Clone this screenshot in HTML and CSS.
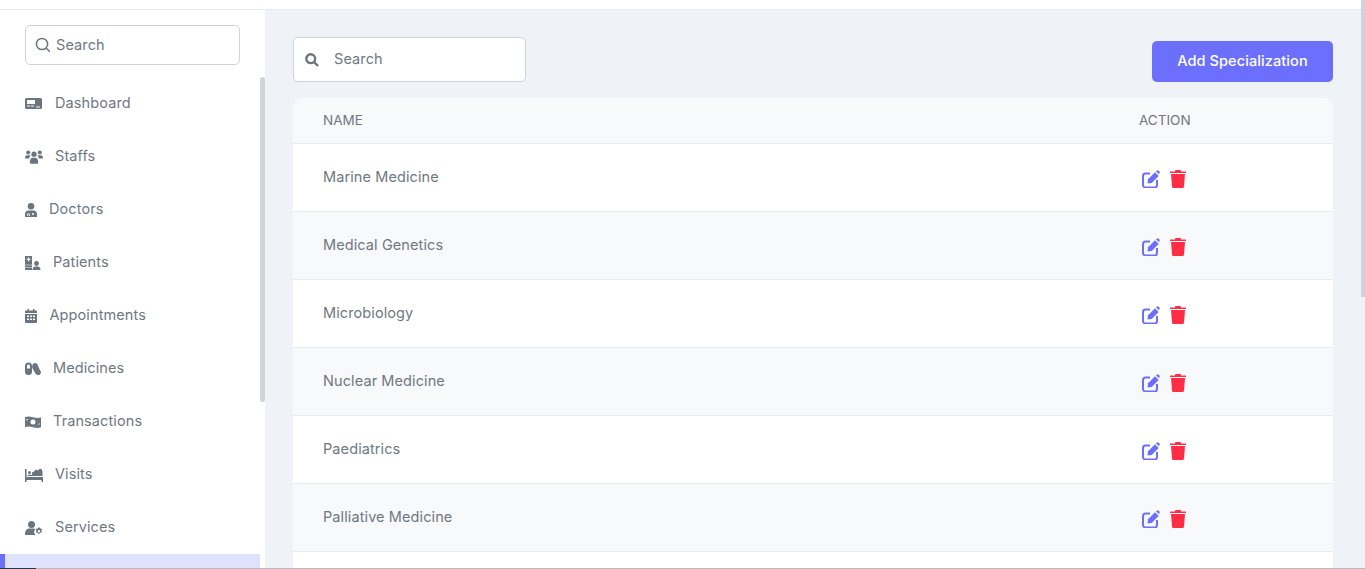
FILE: index.html
```html
<!DOCTYPE html>
<html lang="en">
<head>
<meta charset="utf-8">
<title>Specializations</title>
<link rel="stylesheet" href="styles.css">
</head>
<body>
<div class="page">
  <div class="topbar"></div>
  <div class="layout">
    <aside class="sidebar">
      <div class="side-search">
        <svg class="side-search-icon" viewBox="0 0 16 16"><circle cx="7" cy="7" r="5.600"/><path d="M11 11l3.800 3.800"/></svg>
        <span class="ph">Search</span>
      </div>
      <nav class="nav">
        <a class="nav-item"><svg class="ico w17" viewBox="0 0 17 11"><path fill-rule="evenodd" d="M1.500 0h14A1.500 1.500 0 0 1 17 1.500v8a1.500 1.500 0 0 1-1.500 1.500h-14A1.500 1.500 0 0 1 0 9.500v-8A1.500 1.500 0 0 1 1.500 0zM2 2v4h8V2zM2 7.500v1h3v-1zm4 0v1h3v-1zm5 1v1h4v-1z"/></svg><span class="lbl l13">Dashboard</span></a>
        <a class="nav-item"><svg class="ico w18" viewBox="0 0 18 14"><circle cx="3.200" cy="2.500" r="2"/><circle cx="14.800" cy="2.500" r="2"/><circle cx="9" cy="4.200" r="2.600"/><path d="M0 8c0-2 1-2.800 2.200-2.800h2.300c.6 0 .9.200 1.200.5-.8.600-1.400 1.500-1.500 2.800H0zM18 8c0-2-1-2.800-2.200-2.800h-2.300c-.6 0-.9.200-1.200.5.8.600 1.400 1.500 1.500 2.800H18zM4.800 12.500c0-3 1.200-4.800 2.800-4.800h2.800c1.600 0 2.800 1.800 2.800 4.800 0 .8-.4 1.200-1 1.200H5.800c-.6 0-1-.4-1-1.200z"/></svg><span class="lbl l12">Staffs</span></a>
        <a class="nav-item"><svg class="ico w12" viewBox="0 0 12 14"><circle cx="6" cy="3.300" r="3.300"/><path fill-rule="evenodd" d="M0 14v-3c0-2.300 1.600-3.500 3.300-3.500h5.400C10.400 7.500 12 8.700 12 11v3zM3 10.500a1 1 0 0 0-1 1V13h.8v-1.500h1.200V13h.8v-1.500a1 1 0 0 0-1-1zM8 10a1 1 0 1 0 0 2 1 1 0 0 0 0-2z"/></svg><span class="lbl l12">Doctors</span></a>
        <a class="nav-item"><svg class="ico w16" viewBox="0 0 16 14"><path fill-rule="evenodd" d="M0 0h7v14H0zM3 1.500v1.300H1.800v1.200H3v1.300h1.200V4h1.200V2.800H4.200V1.500zM0 8.700v.6h7v-.6zm0 2.500v.6h7v-.6z"/><circle cx="11.500" cy="7.500" r="2.400"/><path d="M7.500 14c0-2 1.200-3.400 2.500-3.400h3c1.300 0 2.500 1.400 2.500 3.400z"/></svg><span class="lbl l12">Patients</span></a>
        <a class="nav-item"><svg class="ico w12" viewBox="0 0 12 14"><path fill-rule="evenodd" d="M2.500 0h1.500v1.500h4V0h1.500v1.500H11a1 1 0 0 1 1 1V4H0V2.500a1 1 0 0 1 1-1h1.500zM0 5h12v8a1 1 0 0 1-1 1H1a1 1 0 0 1-1-1zM2 6.500V8h2V6.500zm3 0V8h2V6.500zm3 0V8h2V6.500zM2 9.500V11h2V9.500zm3 0V11h2V9.500zm3 0V11h2V9.500z"/></svg><span class="lbl l12h">Appointments</span></a>
        <a class="nav-item"><svg class="ico w16" viewBox="0 0 16 13"><path fill-rule="evenodd" d="M3.500 0A3.500 3.500 0 0 1 7 3.500V9A3.500 3.500 0 0 1 0 9V3.500A3.500 3.500 0 0 1 3.500 0zM3.500 2A1.500 1.500 0 0 0 2 3.500V6h3V3.500A1.500 1.500 0 0 0 3.500 2z"/><path d="M8 1.500c1.300-1.200 3-1.200 4.200 0l2.700 5.900c1.400 1.500 1.400 3.300.1 4.500-1.300 1.200-3 1.100-4.300-.3L8 6.700C6.800 5.300 6.800 2.700 8 1.500z"/></svg><span class="lbl l12">Medicines</span></a>
        <a class="nav-item"><svg class="ico w16" viewBox="0 0 16 12"><path fill-rule="evenodd" d="M0 1.200C2.500 0 5 .4 8 1.200c3 .8 5.500 1 8 0v10c-2.500 1.200-5 .8-8 0-3-.8-5.500-1-8 0zM8 3.500a2.500 2.500 0 1 0 0 5 2.500 2.500 0 0 0 0-5zM1.500 3v1.500A1.500 1.500 0 0 0 3 3zm11.500 6a1.500 1.500 0 0 0 1.500-1.500V6.500z"/></svg><span class="lbl l12">Transactions</span></a>
        <a class="nav-item"><svg class="ico w18" viewBox="0 0 18 14"><path fill-rule="evenodd" d="M0 1h1.500v8H18v5h-1.500v-2h-15v2H0zM3 4.500a1.500 1.500 0 1 1 3 0 1.500 1.500 0 0 1-3 0zM7 4.500l2-1 2-2 2 1 2-2 2 1v1.500h.5V8H2.500V6.800H7z"/></svg><span class="lbl l12">Visits</span></a>
        <a class="nav-item"><svg class="ico w18" viewBox="0 0 18 14"><circle cx="6.500" cy="3.500" r="3.500"/><path fill-rule="evenodd" d="M0 13c0-3.500 2-5.500 4.500-5.500h4c1 0 1.500.2 2 .5A4.500 4.500 0 0 0 10.500 14H1c-.6 0-1-.4-1-1zM14 6.500l1 .2.300 1.100 1-.3.800 1-.7.900.4 1-.6 1.300-1 .1-.6 1-1.300 0-.6-1-1.100-.1-.6-1.300.5-1-.7-.9.800-1 1 .3.300-1.100zM14 9a1.200 1.200 0 1 0 0 2.400A1.200 1.200 0 0 0 14 9z"/></svg><span class="lbl l12">Services</span></a>
        <a class="nav-item active"></a>
      </nav>
    </aside>
    <div class="side-scroll"><div class="side-thumb"></div></div>
    <main class="main">
      <div class="toolbar">
        <div class="main-search">
          <svg class="main-search-icon" viewBox="0 0 14 14"><circle cx="5.700" cy="5.700" r="4.400"/><path d="M9 9l4 4"/></svg>
          <span class="ph">Search</span>
        </div>
        <button class="add-btn">Add Specialization</button>
      </div>
      <div class="table">
        <div class="row head"><div class="c-name">NAME</div><div class="c-action">ACTION</div></div>
        <div class="row"><div class="c-name">Marine Medicine</div><div class="c-action"><svg class="edit" viewBox="0 0 18 18"><use href="#edit-i"/></svg><svg class="trash" viewBox="0 0 16 18"><use href="#trash-i"/></svg></div></div>
        <div class="row alt"><div class="c-name">Medical Genetics</div><div class="c-action"><svg class="edit" viewBox="0 0 18 18"><use href="#edit-i"/></svg><svg class="trash" viewBox="0 0 16 18"><use href="#trash-i"/></svg></div></div>
        <div class="row"><div class="c-name">Microbiology</div><div class="c-action"><svg class="edit" viewBox="0 0 18 18"><use href="#edit-i"/></svg><svg class="trash" viewBox="0 0 16 18"><use href="#trash-i"/></svg></div></div>
        <div class="row alt"><div class="c-name">Nuclear Medicine</div><div class="c-action"><svg class="edit" viewBox="0 0 18 18"><use href="#edit-i"/></svg><svg class="trash" viewBox="0 0 16 18"><use href="#trash-i"/></svg></div></div>
        <div class="row"><div class="c-name">Paediatrics</div><div class="c-action"><svg class="edit" viewBox="0 0 18 18"><use href="#edit-i"/></svg><svg class="trash" viewBox="0 0 16 18"><use href="#trash-i"/></svg></div></div>
        <div class="row alt"><div class="c-name">Palliative Medicine</div><div class="c-action"><svg class="edit" viewBox="0 0 18 18"><use href="#edit-i"/></svg><svg class="trash" viewBox="0 0 16 18"><use href="#trash-i"/></svg></div></div>
        <div class="row last"></div>
      </div>
    </main>
  </div>
</div>
<div class="page-scroll"><div class="page-thumb"></div></div>
<div class="bottom-line"><div class="bottom-dark"></div></div>
<svg class="defs" width="0" height="0">
  <defs>
    <g id="edit-i">
      <path d="M8 3.500H3.500A2.500 2.500 0 0 0 1 6v9a2.500 2.500 0 0 0 2.500 2.500h9A2.500 2.500 0 0 0 15 15v-5" fill="none" stroke="currentColor" stroke-width="2"/>
      <path d="M6 9.300L13 2.300l3.700 3.700-7 7-4.200.6z" fill="currentColor"/>
      <path d="M14 1.300l.6-.6a1.500 1.500 0 0 1 2.100 0l.6.600a1.500 1.500 0 0 1 0 2.100l-.6.600z" fill="currentColor"/>
    </g>
    <g id="trash-i">
      <path d="M5.500 0h5l.7 1.500H15.500a.5.500 0 0 1 .5.500v1H0V2a.5.500 0 0 1 .5-.5h4.300z" fill="currentColor"/>
      <path d="M1 4h14l-1 12.500a1.500 1.500 0 0 1-1.500 1.500h-9A1.500 1.500 0 0 1 2 16.500z" fill="currentColor"/>
    </g>
  </defs>
</svg>
</body>
</html>
```
FILE: styles.css
```css
* { box-sizing: border-box; }
html, body { margin: 0; height: 569px; overflow: hidden; }
body {
  font-family: "Inter", "Liberation Sans", sans-serif;
  font-size: 14.5px;
  letter-spacing: 0.1px;
  color: #6f7880;
  background: #eff2f7;
  display: flex;
}
.page { flex: 1; min-width: 0; display: flex; flex-direction: column; }
.topbar { height: 9px; background: #fff; flex: none; }
.layout { flex: 1; display: flex; min-height: 0; overflow: hidden; border-top: 1px solid #e9ecef; }
.sidebar { width: 260px; flex: none; background: #fff; display: flex; flex-direction: column; }
.side-search {
  margin: 15px 0 0 25px;
  width: 215px;
  height: 40px;
  flex: none;
  border: 1px solid #ced4da;
  border-radius: 5px;
  display: flex;
  align-items: center;
  gap: 5px;
  padding-left: 9px;
}
.side-search-icon { width: 16px; height: 16px; fill: none; stroke: #6c757d; stroke-width: 1.500; flex: none; }
.ph { padding-bottom: 2px; }
.nav { margin-top: 12px; display: flex; flex-direction: column; flex: 1; }
.nav-item { height: 53px; display: flex; align-items: center; padding-left: 25px; flex: none; }
.nav-item.active { background: #dfe2fd; border-left: 5px solid #6c6ffb; flex: 1; height: auto; }
.ico { fill: #6c757d; height: 14px; flex: none; }
.w18 { width: 18px; }
.w17 { width: 17px; height: 11px; }
.w16 { width: 16px; }
.w12 { width: 12px; }
.l12 { margin-left: 12px; }
.l12h { margin-left: 12.500px; }
.l13 { margin-left: 13px; }
.lbl { padding-bottom: 2px; }
.side-scroll { width: 5px; flex: none; background: #fff; padding-top: 67px; }
.side-thumb { width: 5px; height: 325px; background: #ced4da; border-radius: 3px; }
.main { flex: 1; min-width: 0; background: #eff2f7; padding: 27px 28px 0 28px; display: flex; flex-direction: column; }
.toolbar { display: flex; justify-content: space-between; align-items: flex-end; flex: none; }
.main-search {
  width: 233px;
  height: 45px;
  background: #fff;
  border: 1px solid #ced4da;
  border-radius: 5px;
  display: flex;
  align-items: center;
  gap: 15px;
  padding-left: 11px;
}
.main-search-icon { width: 14px; height: 14px; fill: none; stroke: #6c757d; stroke-width: 2.400; flex: none; }
.add-btn {
  width: 181px;
  height: 41px;
  padding: 0 0 2px;
  background: #6c6ffb;
  color: #fff;
  border: 0;
  border-radius: 5px;
  font: 500 14.5px "Inter", "Liberation Sans", sans-serif;
  letter-spacing: 0.1px;
}
.table { margin-top: 16px; flex: 1; border-radius: 10px 10px 0 0; overflow: hidden; background: #fff; }
.row { height: 68px; display: flex; align-items: center; background: #fff; border-bottom: 1px solid #e9ecef; }
.row.alt { background: #f8f9fb; }
.row.head { height: 46px; background: #f8f9fb; font-size: 13.5px; letter-spacing: 0; }
.row.last { height: 17px; border-bottom: 0; }
.c-name { flex: 1; padding: 0 0 2px 30px; }
.c-action { width: 194px; display: flex; align-items: center; gap: 10px; padding: 3px 0 0 3px; }
.head .c-action { padding: 0 0 2px; }
.edit { width: 18px; height: 18px; color: #6c6ffb; flex: none; }
.trash { width: 16px; height: 18px; color: #ff2e44; flex: none; }
.page-scroll { width: 4px; flex: none; }
.page-thumb { width: 4px; height: 297px; background: #ced4da; }
.bottom-line { position: absolute; left: 0; right: 0; top: 568px; height: 1px; background: #b9b9b9; }
.bottom-dark { width: 36px; height: 1px; background: #1f3a40; }
.defs { position: absolute; }
```
